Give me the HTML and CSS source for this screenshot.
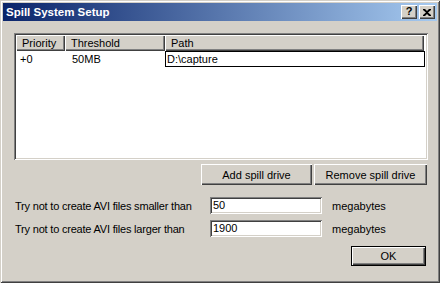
FILE: index.html
```html
<!DOCTYPE html>
<html lang="en">
<head>
  <meta charset="UTF-8"/>
  <title>Spill System Setup</title>
  <link rel="stylesheet" href="styles.css">
</head>
<body>
  <div class="window">
    <!-- Barra de título -->
    <div class="titlebar">
      <span class="title">Spill System Setup</span>
      <div class="caption-buttons">
        <button class="cap-btn help">?</button>
        <button class="cap-btn close">
          <svg width="8" height="7" viewBox="0 0 8 7"><path d="M0 0h2l2 2 2-2h2v1L5 3.5 8 6v1H6L4 5 2 7H0V6l3-2.5L0 1z" fill="#000"/></svg>
        </button>
      </div>
    </div>

    <div class="content">
      <!-- Lista de drives -->
      <div class="listview">
        <div class="lv-header">
          <div class="lv-col col-priority">Priority</div>
          <div class="lv-col col-threshold">Threshold</div>
          <div class="lv-col col-path">Path</div>
        </div>
        <div class="lv-row">
          <div class="lv-cell col-priority">+0</div>
          <div class="lv-cell col-threshold">50MB</div>
          <div class="lv-cell col-path"><span class="cell-edit">D:\capture</span></div>
        </div>
      </div>

      <div class="button-row">
        <button class="btn btn-add">Add spill drive</button>
        <button class="btn btn-remove">Remove spill drive</button>
      </div>

      <div class="field-row">
        <span class="field-label">Try not to create AVI files smaller than</span>
        <div class="edit">50</div>
        <span class="unit">megabytes</span>
      </div>
      <div class="field-row second">
        <span class="field-label">Try not to create AVI files larger than</span>
        <div class="edit">1900</div>
        <span class="unit">megabytes</span>
      </div>

      <div class="footer">
        <button class="btn btn-ok">OK</button>
      </div>
    </div>
  </div>
</body>
</html>
```

FILE: styles.css
```css
/* === Base === */
* { margin:0; padding:0; box-sizing:border-box; }
body { background:#d4d0c8; font-family:"Liberation Sans", Arial, sans-serif; font-size:11px; color:#000; }

/* === Janela === */
.window {
  width:440px; height:283px;
  padding:3px;
  background:#d4d0c8;
  box-shadow: inset 1px 1px #d4d0c8, inset -1px -1px #404040,
              inset 2px 2px #fff, inset -2px -2px #808080;
}

/* === Barra de título === */
.titlebar {
  height:18px;
  display:flex; align-items:center; justify-content:space-between;
  padding:0 2px 0 3px;
  background:linear-gradient(to right, #0a246a, #a6caf0);
}
.title { color:#fff; font-weight:bold; font-size:11.5px; letter-spacing:0; }
.caption-buttons { display:flex; gap:2px; }
.cap-btn {
  width:16px; height:14px;
  border:none; background:#d4d0c8;
  display:flex; align-items:center; justify-content:center;
  font-family:"Liberation Sans", Arial, sans-serif; font-weight:bold; font-size:11px; line-height:1;
  box-shadow: inset 1px 1px #fff, inset -1px -1px #404040, inset -2px -2px #808080;
}
.cap-btn.help { padding-bottom:1px; }

/* === Conteúdo === */
.content { padding:12px 9px 0 11px; }

/* === Listview === */
.listview {
  height:127px;
  background:#fff;
  padding:2px;
  box-shadow: inset 1px 1px #808080, inset -1px -1px #fff,
              inset 2px 2px #404040, inset -2px -2px #d4d0c8;
}
.lv-header { display:flex; height:16px; }
.lv-col {
  background:#d4d0c8;
  padding-left:6px;
  line-height:16px;
  box-shadow: inset 1px 1px #fff, inset -1px -1px #404040, inset -2px -2px #808080;
}
.col-priority { width:49px; }
.col-threshold { width:100px; }
.col-path { width:259px; }
.lv-row { display:flex; height:16px; }
.lv-cell { line-height:16px; padding-left:4px; }
.lv-cell.col-threshold { padding-left:7px; }
.lv-cell.col-path { padding-left:0; }
.cell-edit {
  display:block; width:260px; height:16px;
  border:1px solid #000;
  padding-left:1px; line-height:14px;
}

/* === Botões === */
.btn {
  background:#d4d0c8; border:none;
  font-family:"Liberation Sans", Arial, sans-serif; font-size:11px; color:#000;
  box-shadow: inset 1px 1px #fff, inset -1px -1px #404040, inset -2px -2px #808080;
}
.button-row { display:flex; justify-content:flex-end; gap:2px; margin:4px 1px 0 0; }
.btn-add { width:111px; height:21px; }
.btn-remove { width:113px; height:21px; }

/* === Campos === */
.field-row { display:flex; align-items:center; margin-top:12px; height:17px; }
.field-row.second { margin-top:6px; }
.field-label { width:196px; padding-left:1px; letter-spacing:-0.2px; }
.edit {
  width:112px; height:17px;
  background:#fff;
  padding-left:3px; line-height:17px;
  box-shadow: inset 1px 1px #808080, inset -1px -1px #fff,
              inset 2px 2px #404040, inset -2px -2px #d4d0c8;
}
.unit { margin-left:10px; }

/* === Rodapé === */
.footer { display:flex; justify-content:flex-end; margin:9px 2px 0 0; }
.btn-ok {
  width:75px; height:20px;
  border:1px solid #000;
  box-shadow: inset 1px 1px #fff, inset -1px -1px #404040, inset -2px -2px #808080;
}
```
